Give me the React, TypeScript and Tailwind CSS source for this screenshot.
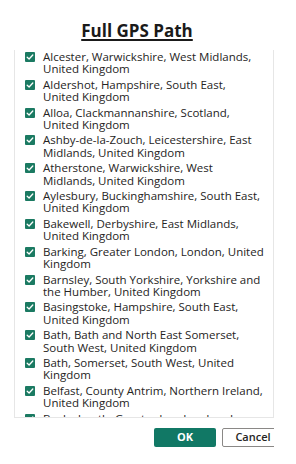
const places: string[][] = [
  ['Alcester, Warwickshire, West Midlands,', 'United Kingdom'],
  ['Aldershot, Hampshire, South East,', 'United Kingdom'],
  ['Alloa, Clackmannanshire, Scotland,', 'United Kingdom'],
  ['Ashby-de-la-Zouch, Leicestershire, East', 'Midlands, United Kingdom'],
  ['Atherstone, Warwickshire, West', 'Midlands, United Kingdom'],
  ['Aylesbury, Buckinghamshire, South East,', 'United Kingdom'],
  ['Bakewell, Derbyshire, East Midlands,', 'United Kingdom'],
  ['Barking, Greater London, London, United', 'Kingdom'],
  ['Barnsley, South Yorkshire, Yorkshire and', 'the Humber, United Kingdom'],
  ['Basingstoke, Hampshire, South East,', 'United Kingdom'],
  ['Bath, Bath and North East Somerset,', 'South West, United Kingdom'],
  ['Bath, Somerset, South West, United', 'Kingdom'],
  ['Belfast, County Antrim, Northern Ireland,', 'United Kingdom'],
  ['Bexleyheath, Greater London, London,', 'United Kingdom'],
];

function Check() {
  return (
    <span className="mt-[1px] flex h-[10px] w-[10px] shrink-0 items-center justify-center rounded-[1px] bg-[#1b7a62]">
      <svg width="8" height="8" viewBox="0 0 8 8" fill="none">
        <path d="M1.2 4.2 L3.1 6 L6.8 2" stroke="white" strokeWidth="1.3" strokeLinecap="round" strokeLinejoin="round" />
      </svg>
    </span>
  );
}

export default function App() {
  return (
    <div className="h-[464px] w-[296px] bg-white" style={{ fontFamily: '"Open Sans", sans-serif' }}>
      <div className="w-[274px] overflow-hidden">
        {/* Title */}
        <div className="pt-[21px] text-center text-[17px] leading-[20px]">
          <span className="font-bold text-[#1a1a1a] underline decoration-[1.5px] underline-offset-[2px]">
            Full GPS Path
          </span>
        </div>

        {/* List */}
        <div className="ml-[14px] mt-[9px] h-[368px] overflow-hidden border-b border-l border-r border-[#e6e6e6] pl-[10px] pt-[1px]">
          <div className="flex flex-col gap-[3px]">
            {places.map(p => (
              <div key={p[0]} className="flex items-start gap-[8px]">
                <Check />
                <div className="text-[11.5px] leading-[12.4px] text-[#252423]">
                  <div className="whitespace-nowrap">{p[0]}</div>
                  <div className="whitespace-nowrap">{p[1]}</div>
                </div>
              </div>
            ))}
          </div>
        </div>

        {/* Buttons */}
        <div className="mt-[10px] flex gap-[6px] pl-[154px]">
          <button className="h-[19px] w-[62px] shrink-0 rounded-[2px] bg-[#117865] text-[11px] font-bold text-white">
            OK
          </button>
          <button className="h-[19px] w-[62px] shrink-0 rounded-[2px] border border-[#8a8886] bg-white text-[11px] font-semibold text-[#252423]">
            Cancel
          </button>
        </div>
      </div>
    </div>
  );
}
